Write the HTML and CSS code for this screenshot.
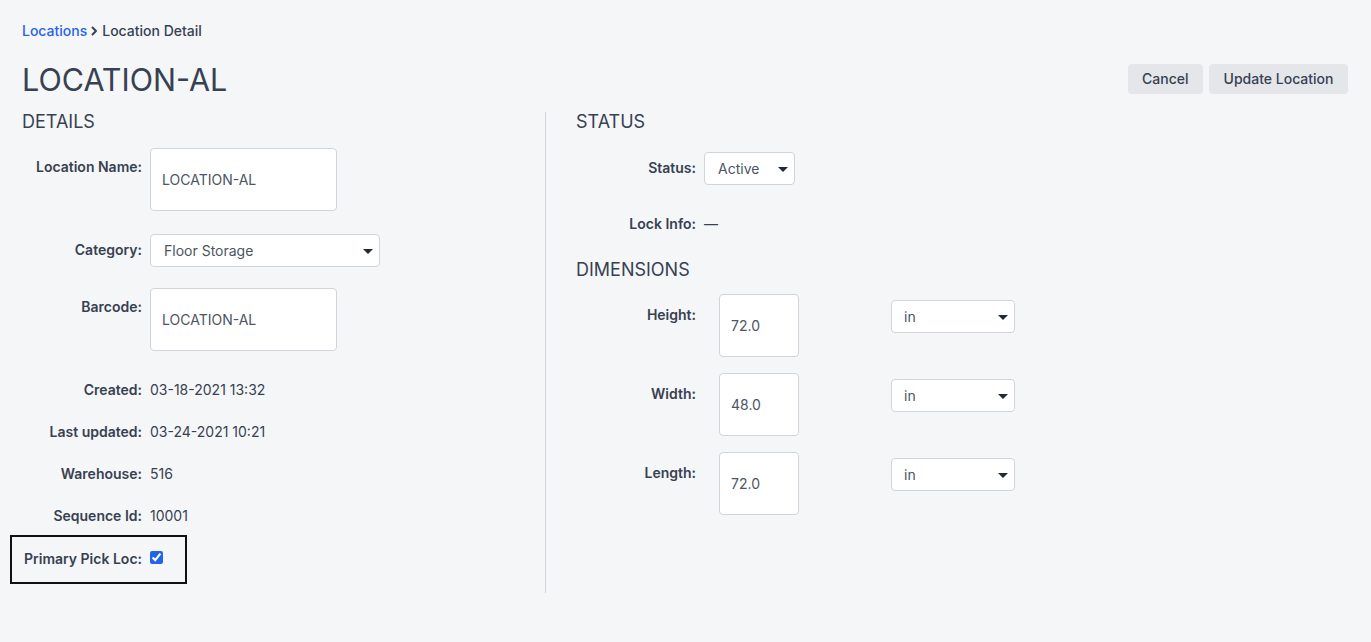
FILE: index.html
```html
<!DOCTYPE html>
<html lang="en">
<head>
    <meta charset="UTF-8">
    <meta name="viewport" content="width=device-width, initial-scale=1.0">
    <title>Location Detail</title>
    <link rel="stylesheet" href="styles.css">
</head>
<body>
    <nav class="breadcrumb">
        <a href="#">Locations</a>
        <svg class="crumb-sep" width="7" height="10" viewBox="0 0 7 10"><path d="M1.5 1.5 L5 5 L1.5 8.5" fill="none" stroke="#374151" stroke-width="2" stroke-linecap="round" stroke-linejoin="round"/></svg>
        <span>Location Detail</span>
    </nav>

    <div class="page-header">
        <h1>LOCATION-AL</h1>
        <div class="actions">
            <button class="btn">Cancel</button>
            <button class="btn">Update Location</button>
        </div>
    </div>

    <div class="columns">
        <section class="col col-left">
            <h2>DETAILS</h2>
            <div class="field field-input">
                <label>Location Name:</label>
                <input type="text" class="text-box" value="LOCATION-AL">
            </div>
            <div class="field field-select">
                <label>Category:</label>
                <span class="select-wrap wide">
                    <select><option>Floor Storage</option></select>
                </span>
            </div>
            <div class="field field-input last-input">
                <label>Barcode:</label>
                <input type="text" class="text-box" value="LOCATION-AL">
            </div>
            <div class="field field-text">
                <label>Created:</label>
                <span>03-18-2021 13:32</span>
            </div>
            <div class="field field-text">
                <label>Last updated:</label>
                <span>03-24-2021 10:21</span>
            </div>
            <div class="field field-text">
                <label>Warehouse:</label>
                <span>516</span>
            </div>
            <div class="field field-text">
                <label>Sequence Id:</label>
                <span>10001</span>
            </div>
            <div class="field highlight">
                <label>Primary Pick Loc:</label>
                <input type="checkbox" class="check" checked>
            </div>
        </section>

        <section class="col col-right">
            <h2>STATUS</h2>
            <div class="field field-select status-row">
                <label>Status:</label>
                <span class="select-wrap narrow">
                    <select><option>Active</option></select>
                </span>
            </div>
            <div class="field field-text">
                <label>Lock Info:</label>
                <span>&mdash;</span>
            </div>

            <h2 class="dims-title">DIMENSIONS</h2>
            <div class="field dim-row">
                <label>Height:</label>
                <input type="text" class="text-box dim-box" value="72.0">
                <span class="select-wrap unit">
                    <select><option>in</option></select>
                </span>
            </div>
            <div class="field dim-row">
                <label>Width:</label>
                <input type="text" class="text-box dim-box" value="48.0">
                <span class="select-wrap unit">
                    <select><option>in</option></select>
                </span>
            </div>
            <div class="field dim-row">
                <label>Length:</label>
                <input type="text" class="text-box dim-box" value="72.0">
                <span class="select-wrap unit">
                    <select><option>in</option></select>
                </span>
            </div>
        </section>
    </div>
</body>
</html>
```

FILE: styles.css
```css
body {
    margin: 0;
    padding: 21px 23px 0 22px;
    background-color: #f5f6f8;
    color: #374151;
    font-family: Inter, "Noto Sans", sans-serif;
    font-size: 14px;
}
.breadcrumb {
    display: flex;
    align-items: center;
    gap: 4px;
    line-height: 20px;
    font-weight: 500;
}
.breadcrumb a {
    color: #2563eb;
    text-decoration: none;
}
.page-header {
    display: flex;
    justify-content: space-between;
    align-items: center;
    margin-top: 21px;
}
h1 {
    margin: 0;
    font-size: 30.5px;
    line-height: 36px;
    font-weight: 400;
    color: #374151;
}
.actions {
    display: flex;
    gap: 6px;
    margin-top: -3px;
}
.btn {
    height: 30px;
    padding: 0 14.5px;
    border: none;
    border-radius: 4px;
    background: #e4e6ea;
    color: #374151;
    font-family: inherit;
    font-size: 14px;
    font-weight: 500;
    cursor: pointer;
}
.columns {
    display: flex;
    margin-top: 14px;
}
.col-left {
    width: 523px;
    padding-bottom: 9px;
}
.col-right {
    border-left: 1px solid #d1d5db;
    padding-left: 30px;
    flex: 1;
}
h2 {
    margin: 0 0 16px;
    font-size: 18px;
    line-height: 20px;
    font-weight: 400;
    color: #374151;
}
.field {
    display: flex;
    align-items: flex-start;
}
.field label {
    width: 120px;
    margin-right: 8px;
    text-align: right;
    font-weight: 600;
    line-height: 20px;
    flex-shrink: 0;
}
.field-input label {
    padding-top: 9px;
}
.field-input {
    margin-bottom: 23px;
}
.field-select {
    margin-bottom: 21px;
}
.field-select label {
    padding-top: 6px;
}
.last-input {
    margin-bottom: 18px;
}
.field-text {
    padding: 11px 0;
    line-height: 20px;
}
.text-box {
    box-sizing: border-box;
    width: 187px;
    height: 63px;
    padding: 0 11px;
    border: 1px solid #d1d5db;
    border-radius: 4px;
    background: #fff;
    color: #4b5563;
    font-family: inherit;
    font-size: 14px;
    outline: none;
}
.select-wrap {
    position: relative;
    display: inline-block;
}
.select-wrap::after {
    content: "";
    position: absolute;
    right: 7px;
    top: 50%;
    margin-top: -2px;
    border-left: 5.5px solid transparent;
    border-right: 5.5px solid transparent;
    border-top: 5px solid #1f2937;
    pointer-events: none;
}
.select-wrap select {
    appearance: none;
    -webkit-appearance: none;
    box-sizing: border-box;
    width: 100%;
    height: 33px;
    padding: 0 13px;
    border: 1px solid #d1d5db;
    border-radius: 4px;
    background: #fff;
    color: #4b5563;
    font-family: inherit;
    font-size: 14px;
}
.wide { width: 230px; }
.narrow { width: 91px; }
.highlight {
    display: inline-flex;
    align-items: center;
    margin: -2px 0 0 -12px;
    padding: 12px 22px 13px 10px;
    border: 2px solid #111;
}
.check {
    width: 13px;
    height: 13px;
    margin: -3px 0 0;
    accent-color: #2563eb;
}
.status-row {
    margin-top: 20px;
    margin-bottom: 18px;
}
.dims-title {
    margin-top: 15px;
    margin-bottom: 14px;
}
.dim-row {
    margin-bottom: 16px;
}
.dim-row label {
    padding-top: 11px;
    margin-right: 23px;
}
.dim-box {
    width: 80px;
}
.unit {
    width: 124px;
    margin: 6px 0 0 92px;
}
.unit select {
    padding: 0 12px;
}
```
